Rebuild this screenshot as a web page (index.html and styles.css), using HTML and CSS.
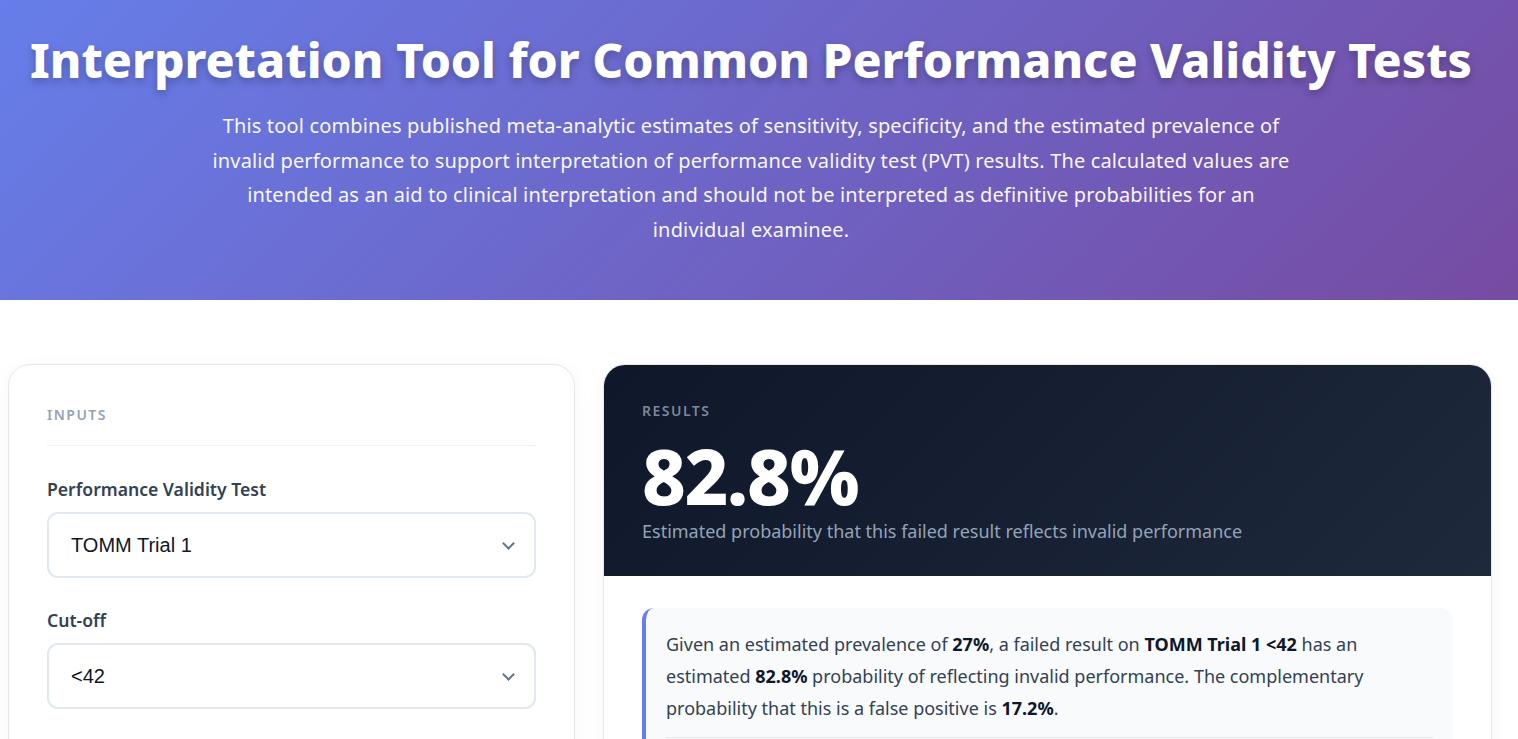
FILE: index.html
```html
<!DOCTYPE html>
<html lang="en">
<head>
  <meta charset="UTF-8">
  <meta name="viewport" content="width=device-width, initial-scale=1.0">
  <title>PVT Interpretation Tool</title>
  <link rel="stylesheet" href="styles.css">
</head>
<body>
  <header class="hero">
    <h1>Interpretation Tool for Common Performance Validity Tests</h1>
    <p class="intro">This tool combines published meta-analytic estimates of sensitivity, specificity, and the estimated prevalence of invalid performance to support interpretation of performance validity test (PVT) results. The calculated values are intended as an aid to clinical interpretation and should not be interpreted as definitive probabilities for an individual examinee.</p>
  </header>

  <main class="layout">
    <section class="card inputs">
      <div class="section-label">Inputs</div>

      <div class="field">
        <label for="test">Performance Validity Test</label>
        <div class="select-wrap">
          <select id="test">
            <option>TOMM Trial 1</option>
            <option>TOMM Trial 2</option>
            <option>WMT IR</option>
            <option>RDS</option>
          </select>
        </div>
      </div>

      <div class="field">
        <label for="cutoff">Cut-off</label>
        <div class="select-wrap">
          <select id="cutoff">
            <option>&lt;42</option>
            <option>&lt;45</option>
          </select>
        </div>
      </div>

      <div class="field">
        <label for="prevalence">Estimated Prevalence</label>
      </div>
    </section>

    <section class="card results">
      <div class="results-head">
        <div class="section-label">Results</div>
        <div class="big-number">82.8%</div>
        <div class="big-caption">Estimated probability that this failed result reflects invalid performance</div>
      </div>
      <div class="results-body">
        <div class="summary">
          <p>Given an estimated prevalence of <strong>27%</strong>, a failed result on <strong>TOMM Trial 1 &lt;42</strong> has an estimated <strong>82.8%</strong> probability of reflecting invalid performance. The complementary probability that this is a false positive is <strong>17.2%</strong>.</p>
          <div class="summary-rule"></div>
        </div>
      </div>
    </section>
  </main>
</body>
</html>
```

FILE: styles.css
```css
* {
  box-sizing: border-box;
}
body {
  margin: 0;
  font-family: "Noto Sans", "Open Sans", sans-serif;
  background-color: #ffffff;
  color: #334155;
}
.hero {
  height: 300px;
  padding: 30px 36px 0 20px;
  background: linear-gradient(135deg, #667eea 0%, #764ba2 100%);
  color: white;
  text-align: center;
}
.hero h1 {
  margin: 0;
  font-size: 48px;
  font-weight: 800;
  line-height: 1.25;
  text-shadow: 0 4px 8px rgba(0,0,0,0.25);
}
.intro {
  max-width: 1090px;
  margin: 19px auto 0;
  font-size: 20px;
  line-height: 34.5px;
  letter-spacing: 0.15px;
  opacity: 0.95;
}
.layout {
  display: grid;
  grid-template-columns: 567px 1fr;
  gap: 28px;
  padding: 64px 26px 40px 8px;
  align-items: start;
}
.card {
  background: white;
  border: 1px solid #e5e7eb;
  border-radius: 22px;
  box-shadow: 0 4px 20px rgba(15,23,42,0.04);
  overflow: hidden;
}
.inputs {
  padding: 40px 38px 40px;
}
.section-label {
  font-size: 14px;
  font-weight: 600;
  letter-spacing: 1.5px;
  text-transform: uppercase;
  color: #94a3b8;
}
.inputs .section-label {
  padding-bottom: 21px;
  border-bottom: 1px solid #eef1f5;
  margin-bottom: 31px;
}
.field {
  margin-bottom: 30px;
}
.field label {
  display: block;
  font-size: 17.6px;
  font-weight: 600;
  color: #334155;
  margin-bottom: 11px;
}
.select-wrap {
  position: relative;
}
.select-wrap::after {
  content: "";
  position: absolute;
  right: 23px;
  top: 50%;
  width: 7px;
  height: 7px;
  margin-top: -6px;
  border-right: 2px solid #64748b;
  border-bottom: 2px solid #64748b;
  transform: rotate(45deg);
  pointer-events: none;
}
select {
  appearance: none;
  width: 100%;
  height: 66px;
  padding: 0 22px;
  font-family: "Liberation Sans", Arial, sans-serif;
  font-size: 20px;
  color: #0f172a;
  background: white;
  border: 2px solid #e2e8f0;
  border-radius: 11px;
}
.results-head {
  padding: 36px 38px 33px;
  background: linear-gradient(135deg, #0f172a 0%, #1e293b 100%);
}
.results-head .section-label {
  color: #7c8696;
}
.big-number {
  margin-top: 14px;
  font-size: 76px;
  font-weight: 800;
  line-height: 1.1;
  color: white;
  letter-spacing: -1.5px;
}
.big-caption {
  font-size: 18px;
  color: #94a3b8;
  margin-top: 1px;
}
.results-body {
  padding: 32px 38px 40px;
}
.summary {
  background: #f8fafc;
  border-left: 4px solid #667eea;
  border-radius: 12px;
  padding: 20px 20px 18px 20px;
}
.summary p {
  margin: 0;
  font-size: 18px;
  line-height: 32px;
  color: #334155;
}
.summary strong {
  color: #0f172a;
}
.summary-rule {
  margin-top: 13px;
  border-top: 1px solid #e2e8f0;
}
```
